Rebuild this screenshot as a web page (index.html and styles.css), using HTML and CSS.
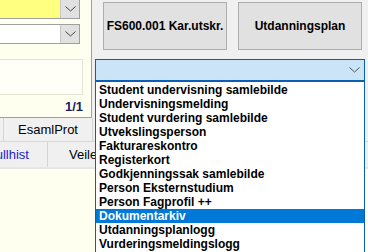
FILE: index.html
```html
<!DOCTYPE html>
<html>
<head>
<meta charset="utf-8">
<link rel="stylesheet" href="styles.css">
</head>
<body>
<div class="screen">
  <div class="top">
    <div class="left">
      <div class="combo yellow">
        <div class="field"></div>
        <div class="drop"><svg width="11" height="6" viewBox="0 0 11 6"><path d="M0.5 0.5 L5.5 5 L10.5 0.5" fill="none" stroke="#444" stroke-width="1"/></svg></div>
      </div>
      <div class="combo white">
        <div class="field"></div>
        <div class="drop"><svg width="11" height="6" viewBox="0 0 11 6"><path d="M0.5 0.5 L5.5 5 L10.5 0.5" fill="none" stroke="#444" stroke-width="1"/></svg></div>
      </div>
      <div class="memo"></div>
      <div class="count">1/1</div>
    </div>
    <div class="right">
      <div class="buttons">
        <div class="btn b1">FS600.001 Kar.utskr.</div>
        <div class="btn b2">Utdanningsplan</div>
      </div>
      <div class="dd">
        <svg width="11" height="6" viewBox="0 0 11 6"><path d="M0.5 0.5 L5.5 5 L10.5 0.5" fill="none" stroke="#555" stroke-width="1"/></svg>
      </div>
    </div>
  </div>
  <div class="tabs">
    <div class="row r1">
      <span class="tab t0"></span>
      <span class="tab t1">EsamlProt</span>
      <span class="tab t2"></span>
    </div>
    <div class="row r2">
      <span class="tab link">ullhist</span>
      <span class="tab t3">Veiledning</span>
    </div>
  </div>
  <ul class="list">
    <li>Student undervisning samlebilde</li>
    <li>Undervisningsmelding</li>
    <li>Student vurdering samlebilde</li>
    <li>Utvekslingsperson</li>
    <li>Fakturareskontro</li>
    <li>Registerkort</li>
    <li>Godkjenningssak samlebilde</li>
    <li>Person Eksternstudium</li>
    <li>Person Fagprofil ++</li>
    <li class="sel">Dokumentarkiv</li>
    <li>Utdanningsplanlogg</li>
    <li>Vurderingsmeldingslogg</li>
  </ul>
</div>
</body>
</html>
```

FILE: styles.css
```css
html, body {
  margin: 0;
  padding: 0;
  background: #fffff0;
}
.screen {
  position: relative;
  width: 368px;
  height: 252px;
  overflow: hidden;
  font-family: "Liberation Sans", Arial, sans-serif;
  background: #fffff0;
}
.top {
  display: flex;
  height: 118px;
}
.left {
  width: 91px;
  height: 117px;
  border-right: 1px solid #a0a0a0;
  border-bottom: 1px solid #a0a0a0;
  background: #fffff0;
  display: flex;
  flex-direction: column;
}
.combo {
  display: flex;
  width: 80px;
  height: 20px;
  border: 1px solid #a0a0a0;
  border-left: none;
  box-sizing: border-box;
}
.combo.yellow {
  margin-top: -1px;
  background: #ffff80;
}
.combo.white {
  margin-top: 5px;
  background: #ffffff;
}
.combo .field {
  flex: 1;
}
.combo .drop {
  width: 18px;
  background: #e1e1e1;
  border-left: 1px solid #c8c8c8;
  display: flex;
  align-items: center;
  justify-content: center;
}
.memo {
  margin-top: 15px;
  width: 83px;
  height: 36px;
  box-sizing: border-box;
  border: 1px solid #e4e4d4;
  border-left: none;
  background: #fffff8;
}
.count {
  margin-top: 4px;
  width: 83px;
  text-align: right;
  font-weight: bold;
  font-size: 13px;
  line-height: 15px;
  color: #1c1c6c;
}
.right {
  flex: 1;
  background: #f0f0f0;
  display: flex;
  flex-direction: column;
}
.buttons {
  display: flex;
  gap: 11px;
  padding: 2px 0 0 11px;
}
.btn {
  height: 48px;
  box-sizing: border-box;
  border: 1px solid #adadad;
  background: #e1e1e1;
  font-weight: bold;
  font-size: 12px;
  color: #000;
  display: flex;
  align-items: center;
  justify-content: center;
}
.b1 { width: 124px; }
.b2 { width: 124px; }
.dd {
  margin: 9px 0 0 3px;
  width: 270px;
  height: 22px;
  box-sizing: border-box;
  border: 1px solid #0a5fb4;
  background: #cce4f7;
  display: flex;
  align-items: center;
  justify-content: flex-end;
  padding-right: 4px;
}
.tabs {
  background: #f0f0f0;
}
.row {
  display: flex;
  border-bottom: 1px solid #d8d8d8;
  font-size: 13px;
}
.r1 { height: 23px; }
.r2 { height: 25px; border-bottom: 2px solid #e6e6e6; }
.tab {
  display: flex;
  align-items: center;
  justify-content: center;
  border-right: 1px solid #d4d4d4;
  color: #000;
}
.t0 { width: 3px; }
.t1 { width: 88px; }
.t2 { flex: 1; border-right: none; }
.link { width: 47px; color: #1a1ad0; justify-content: flex-end; padding-right: 18px; box-sizing: border-box; width: 48px; }
.t3 { flex: 1; justify-content: flex-start; padding-left: 21px; border-right: none; }
.list {
  position: absolute;
  left: 95px;
  top: 81px;
  width: 270px;
  height: 175px;
  margin: 0;
  padding: 1px 0 0 0;
  list-style: none;
  box-sizing: border-box;
  background: #ffffff;
  border: 1px solid #0a5fb4;
}
.list li {
  height: 14px;
  line-height: 14px;
  padding-left: 3px;
  font-size: 12px;
  font-weight: bold;
  color: #000;
  white-space: nowrap;
}
.list li.sel {
  background: #0078d7;
  color: #ffffff;
}
```
